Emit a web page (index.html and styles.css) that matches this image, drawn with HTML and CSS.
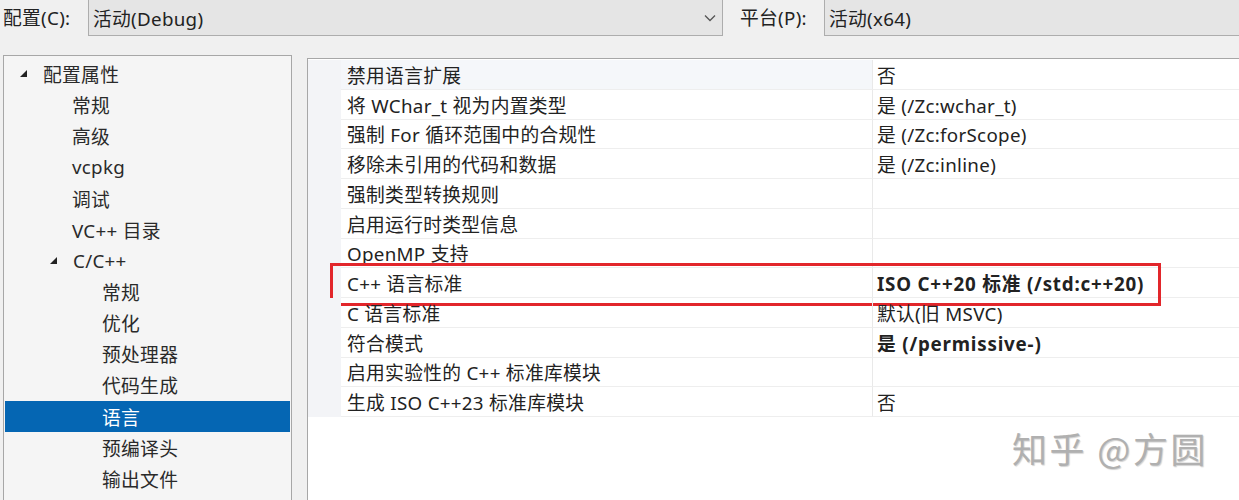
FILE: index.html
```html
<!DOCTYPE html>
<html lang="zh-CN">
<head>
<meta charset="utf-8">
<title>属性页</title>
<link rel="stylesheet" href="styles.css">
</head>
<body>
<div class="app">
  <div class="topbar">
    <span class="lbl lbl-config">配置(C):</span>
    <div class="combo combo-config">
      <span class="combo-text">活动(Debug)</span>
      <svg class="chev" width="12" height="8" viewBox="0 0 12 8"><polyline points="1,1.5 6,6.5 11,1.5" fill="none" stroke="#555" stroke-width="1.3"/></svg>
    </div>
    <span class="lbl lbl-platform">平台(P):</span>
    <div class="combo combo-platform">
      <span class="combo-text">活动(x64)</span>
    </div>
  </div>

  <div class="main">
    <div class="tree">
      <div class="node lvl0"><svg class="tri" width="7" height="7" viewBox="0 0 7 7"><polygon points="7,0 7,7 0,7" fill="#222"/></svg>配置属性</div>
      <div class="node lvl1">常规</div>
      <div class="node lvl1">高级</div>
      <div class="node lvl1">vcpkg</div>
      <div class="node lvl1">调试</div>
      <div class="node lvl1">VC++ 目录</div>
      <div class="node lvl1x"><svg class="tri" width="7" height="7" viewBox="0 0 7 7"><polygon points="7,0 7,7 0,7" fill="#222"/></svg>C/C++</div>
      <div class="node lvl2">常规</div>
      <div class="node lvl2">优化</div>
      <div class="node lvl2">预处理器</div>
      <div class="node lvl2">代码生成</div>
      <div class="node lvl2 selected">语言</div>
      <div class="node lvl2">预编译头</div>
      <div class="node lvl2">输出文件</div>
    </div>

    <div class="grid">
      <div class="row first"><div class="gut"></div><div class="name">禁用语言扩展</div><div class="val">否</div></div>
      <div class="row"><div class="gut"></div><div class="name">将 WChar_t 视为内置类型</div><div class="val">是 (/Zc:wchar_t)</div></div>
      <div class="row"><div class="gut"></div><div class="name">强制 For 循环范围中的合规性</div><div class="val">是 (/Zc:forScope)</div></div>
      <div class="row"><div class="gut"></div><div class="name">移除未引用的代码和数据</div><div class="val">是 (/Zc:inline)</div></div>
      <div class="row"><div class="gut"></div><div class="name">强制类型转换规则</div><div class="val"></div></div>
      <div class="row"><div class="gut"></div><div class="name">启用运行时类型信息</div><div class="val"></div></div>
      <div class="row"><div class="gut"></div><div class="name">OpenMP 支持</div><div class="val"></div></div>
      <div class="row marked"><div class="gut"></div><div class="name">C++ 语言标准</div><div class="val bold">ISO C++20 标准 (/std:c++20)</div><div class="mark"></div></div>
      <div class="row"><div class="gut"></div><div class="name">C 语言标准</div><div class="val">默认(旧 MSVC)</div></div>
      <div class="row"><div class="gut"></div><div class="name">符合模式</div><div class="val bold">是 (/permissive-)</div></div>
      <div class="row"><div class="gut"></div><div class="name">启用实验性的 C++ 标准库模块</div><div class="val"></div></div>
      <div class="row"><div class="gut"></div><div class="name">生成 ISO C++23 标准库模块</div><div class="val">否</div></div>
    </div>
  </div>

  <div class="watermark">知乎 @方圆</div>
</div>
</body>
</html>
```

FILE: styles.css
```css
html, body {
  margin: 0;
  padding: 0;
}
body {
  width: 1239px;
  height: 500px;
  overflow: hidden;
  background: #f0f0f0;
  font-family: "Noto Sans", "Noto Sans CJK SC", sans-serif;
  font-size: 18.75px;
  letter-spacing: 0.3px;
  color: #222;
}
.app {
  position: relative;
  width: 1239px;
  height: 500px;
  overflow: hidden;
}

/* top bar */
.topbar {
  display: flex;
  align-items: flex-start;
  height: 37px;
}
.lbl {
  flex: none;
  height: 36px;
  line-height: 36px;
  white-space: nowrap;
}
.lbl-config {
  padding-left: 3px;
  width: 85px;
}
.lbl-platform {
  margin-left: 17px;
  width: 84px;
}
.combo {
  box-sizing: border-box;
  height: 36px;
  border: 1px solid #adadad;
  border-top: none;
  background: #e5e5e5;
  display: flex;
  align-items: center;
  padding-left: 4px;
}
.combo-config {
  flex: none;
  width: 635px;
  justify-content: space-between;
  padding-right: 6px;
}
.combo-platform {
  flex: 1;
  border-right: none;
}
.combo-text {
  white-space: nowrap;
}
.chev {
  display: block;
}

/* main */
.main {
  display: flex;
  margin-top: 18px;
  align-items: flex-start;
}
.tree {
  flex: none;
  box-sizing: border-box;
  margin-left: 3px;
  width: 289px;
  height: 460px;
  border: 1px solid #a7a7a7;
  background: #f5f5f5;
  padding: 2px 1px;
}
.node {
  height: 31.15px;
  display: flex;
  align-items: center;
  white-space: nowrap;
  color: #2a2a2a;
}
.tri {
  display: block;
  margin-right: 16px;
  flex: none;
}
.lvl0 { padding-left: 15px; }
.lvl1 { padding-left: 67px; }
.lvl1x { padding-left: 45px; }
.lvl2 { padding-left: 97px; }
.node.selected {
  background: #0566b3;
  color: #fff;
}

.grid {
  flex: none;
  box-sizing: border-box;
  margin-left: 15px;
  margin-top: 3px;
  width: 960px;
  height: 460px;
  border: 1px solid #a7a7a7;
  border-right: none;
  background: #fff;
  padding-top: 1px;
}
.row {
  position: relative;
  display: grid;
  grid-template-columns: 33px 531px 1fr;
  height: 29.75px;
}
.gut {
  background: #f3f4f7;
}
.name, .val {
  box-sizing: border-box;
  border-bottom: 1px solid #eeeeee;
  display: flex;
  align-items: center;
  white-space: nowrap;
}
.name {
  padding-left: 6px;
}
.row.first .name {
  background: #f5f7fa;
}
.val {
  border-left: 1px solid #e9e9e9;
  padding-left: 4px;
}
.val.bold {
  font-weight: 700;
  letter-spacing: 0.8px;
}
.mark {
  position: absolute;
  left: 22px;
  top: -5px;
  width: 831px;
  height: 43px;
  box-sizing: border-box;
  border: 3px solid #e2262b;
  pointer-events: none;
}

.watermark {
  position: absolute;
  left: 1012px;
  top: 422px;
  font-family: "Noto Sans CJK SC", sans-serif;
  font-size: 35px;
  color: #b0b0b0;
  letter-spacing: 2.5px;
  text-shadow: 1px 1px 1px rgba(0,0,0,0.18);
  white-space: nowrap;
}
```
